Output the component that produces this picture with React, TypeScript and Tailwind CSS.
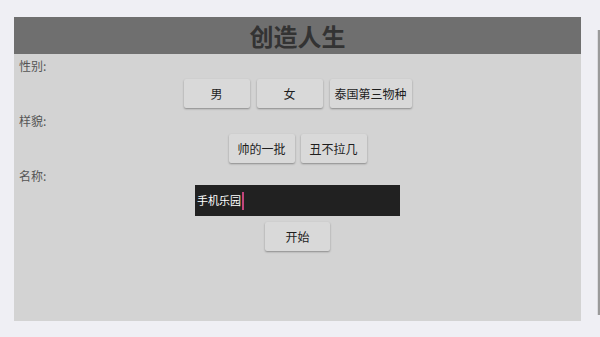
import { useState } from 'react';

const font = { fontFamily: '"Noto Sans CJK SC", "Noto Sans", sans-serif' };

function Choice({ label, width, onClick }: { label: string; width: string; onClick?: () => void }) {
  return (
    <button
      type="button"
      onClick={onClick}
      className={`${width} h-[29px] bg-[#d9d9d9] text-[12px] text-[#1e1e1e] rounded-[2px] shadow-[0_1px_2px_rgba(0,0,0,0.35)]`}
    >
      {label}
    </button>
  );
}

export default function App() {
  const [name, setName] = useState('手机乐园');

  return (
    <div className="w-[600px] h-[337px] bg-[#efeff4] flex overflow-hidden" style={font}>
      <div className="ml-[14px] mt-[17px] w-[567px] h-[304px] bg-[#d3d3d3] flex flex-col">
        {/* title bar */}
        <div className="h-[37px] bg-[#6f6f6f] flex items-center justify-center">
          <h1 className="text-[24px] font-bold text-[#333333] leading-none">创造人生</h1>
        </div>

        <div className="flex flex-col">
          <p className="mt-[4px] pl-[5px] text-[12px] leading-[16px] text-[#555]">性别:</p>
          <div className="mt-[5px] flex justify-center gap-[7px]">
            <Choice label="男" width="w-[66px]" />
            <Choice label="女" width="w-[66px]" />
            <Choice label="泰国第三物种" width="w-[82px]" />
          </div>

          <p className="mt-[5px] pl-[5px] text-[12px] leading-[16px] text-[#555]">样貌:</p>
          <div className="mt-[5px] flex justify-center gap-[6px]">
            <Choice label="帅的一批" width="w-[66px]" />
            <Choice label="丑不拉几" width="w-[66px]" />
          </div>

          <p className="mt-[5px] pl-[5px] text-[12px] leading-[16px] text-[#555]">名称:</p>
          <div className="mt-[1px] flex justify-center">
            <div className="w-[205px] h-[31px] bg-[#212121] flex items-center pl-[2px]">
              <span className="text-[11px] text-white leading-none">{name}</span>
              <span className="ml-[1px] w-[2px] h-[18px] bg-[#c2457a]" />
              <input
                value={name}
                onChange={(e) => setName(e.target.value)}
                className="sr-only"
              />
            </div>
          </div>

          <div className="mt-[6px] flex justify-center">
            <Choice label="开始" width="w-[65px]" />
          </div>
        </div>
      </div>
      <div className="ml-auto mt-[30px] w-[3px] h-[285px] bg-[#9a9a9a] border-l border-[#dcdce0]" />
    </div>
  );
}
